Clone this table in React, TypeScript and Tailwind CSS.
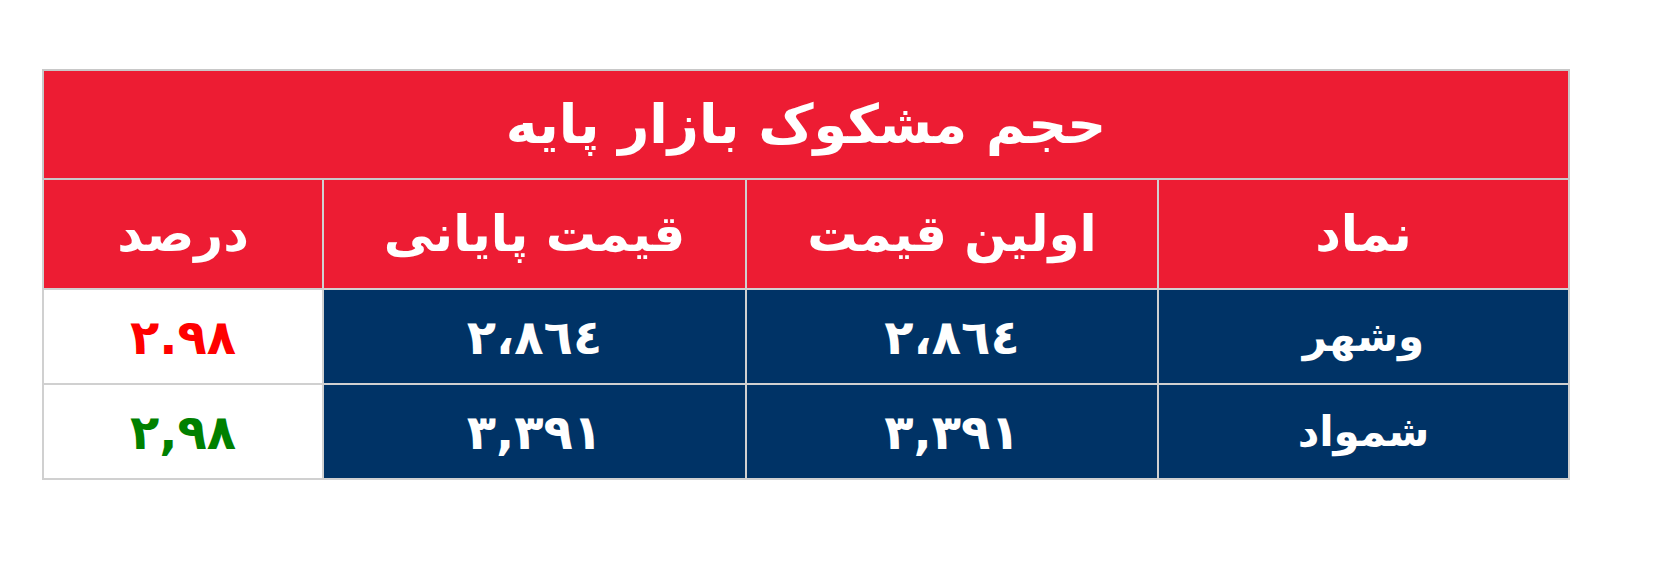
const rows = [
  { symbol: "وشهر", first: "٢،٨٦٤", last: "٢،٨٦٤", pct: "٢.٩٨", pctColor: "text-[#ff0000]" },
  { symbol: "شمواد", first: "٣,٣٩١", last: "٣,٣٩١", pct: "٢,٩٨", pctColor: "text-[#008000]" },
]

export default function App() {
  return (
    <div className="min-h-[561px] bg-white pt-[69px] pl-[42px] font-['DejaVu_Sans',sans-serif]">
      <table dir="rtl" className="w-[1528px] border-collapse border-2 border-[#bdbdbd] text-center font-bold">
        <thead>
          <tr className="h-[109px] bg-[#ed1c33] text-white">
            <th colSpan={4} className="border-2 border-[#c8c8c8] text-[54px] leading-none">
              حجم مشکوک بازار پایه
            </th>
          </tr>
          <tr className="h-[110px] bg-[#ed1c33] text-[50px] leading-none text-white">
            <th className="w-[411px] border-2 border-[#d0d0d0]">نماد</th>
            <th className="w-[412px] border-2 border-[#d0d0d0]">اولین قیمت</th>
            <th className="w-[423px] border-2 border-[#d0d0d0]">قیمت پایانی</th>
            <th className="border-2 border-[#d0d0d0]">درصد</th>
          </tr>
        </thead>
        <tbody className="text-[48px] leading-none">
          {rows.map((r) => (
            <tr key={r.symbol} className="h-[95px]">
              <td className="border-2 border-[#d0d0d0] bg-[#003366] text-[42px] text-white">{r.symbol}</td>
              <td className="border-2 border-[#d0d0d0] bg-[#003366] text-white">{r.first}</td>
              <td className="border-2 border-[#d0d0d0] bg-[#003366] text-white">{r.last}</td>
              <td className={`border-2 border-[#d0d0d0] bg-white ${r.pctColor}`}>{r.pct}</td>
            </tr>
          ))}
        </tbody>
      </table>
    </div>
  )
}
